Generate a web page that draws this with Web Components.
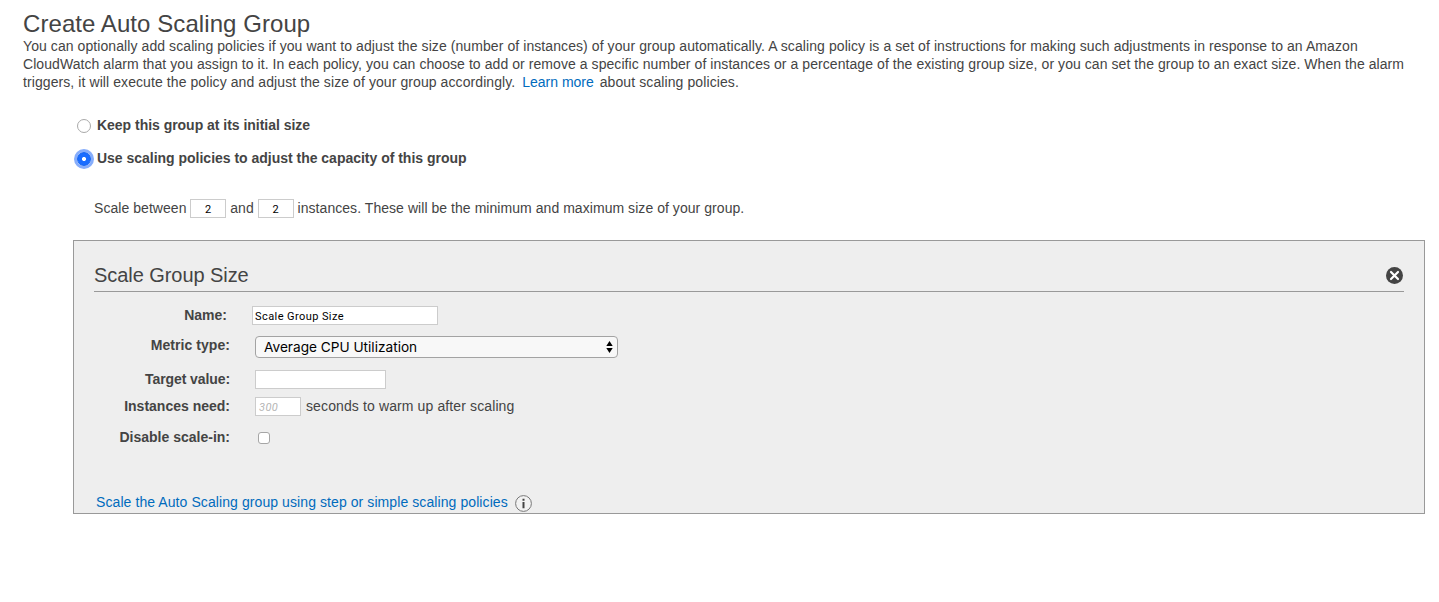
<!DOCTYPE html>
<html lang="en">
<head>
<meta charset="utf-8">
<title>Create Auto Scaling Group</title>
<style>
body{margin:0;background:#fff;font-family:"Liberation Sans",Arial,sans-serif;font-size:14px;line-height:18px;color:#444}
</style>
</head>
<body>
<asg-page></asg-page>
<script>
const define=(name,html,setup)=>{
  const t=document.createElement('template');t.innerHTML=html;
  customElements.define(name,class extends HTMLElement{
    constructor(){super();this.attachShadow({mode:'open'}).append(t.content.cloneNode(true));}
    connectedCallback(){if(setup)setup(this,this.shadowRoot);}
  });
};

define('asg-radio',`<style>
:host{display:flex;align-items:center;height:18px;font-weight:bold;white-space:nowrap}
i{box-sizing:border-box;flex:none;width:14px;height:14px;margin:2px 6px 0 0;border:1px solid #a9a9a9;border-radius:50%;background:#fff}
:host([checked]) i{border:1px solid #0f62f2;background:radial-gradient(circle,#fff 0 1.6px,#1a6dff 2.4px);box-shadow:0 0 0 3px #86adfb}
span{letter-spacing:var(--track,0)}
</style><i></i><span><slot></slot></span>`);

define('asg-input',`<style>
:host{display:inline-flex;box-sizing:border-box;align-items:center;width:var(--w,36px);height:19px;border:1px solid #ccc;background:#fff;color:#000;font:11px/15px Roboto,sans-serif;letter-spacing:.42px;padding:2px 2px 0;white-space:nowrap}
:host([center]){justify-content:center}
:host([hint]){color:#b5b5b5;font-style:italic;padding-left:3px}
</style><slot></slot>`);

define('asg-select',`<style>
:host{display:flex;box-sizing:border-box;align-items:center;justify-content:space-between;width:363px;height:22px;border:1px solid #a3a3a3;border-radius:4px;background:#f8f8f8;color:#000;font:13.65px/20px Inter,sans-serif;padding:0 4px 0 8px}
svg{display:block}
</style><span><slot></slot></span><svg width="7" height="14" viewBox="0 0 7 14"><path d="M3.5 1 6.7 6H.3zM3.5 13 6.7 8H.3z" fill="#000"/></svg>`);

define('asg-checkbox',`<style>
:host{display:block;box-sizing:border-box;width:12px;height:12px;border:1px solid #a6a6a6;border-radius:3px;background:#fff}
</style>`);

define('asg-close',`<style>:host{display:block;width:17px;height:17px}svg{display:block}</style>
<svg width="17" height="17" viewBox="0 0 17 17"><circle cx="8.5" cy="8.5" r="8.5" fill="#444"/><path d="M5 5l7 7M12 5l-7 7" stroke="#fff" stroke-width="2.2" stroke-linecap="round"/></svg>`);

define('asg-info',`<style>:host{display:block;width:17px;height:17px}svg{display:block}</style>
<svg width="17" height="17" viewBox="0 0 17 17"><circle cx="8.5" cy="8.5" r="7.9" fill="#f2f2f2" stroke="#777" stroke-width="1"/><path d="M7.5 3.8h2v2h-2zM7.5 7h2v6.2h-2z" fill="#444"/></svg>`);

define('asg-field',`<style>
:host{display:flex;height:var(--h,27px);align-items:flex-start}
.l{box-sizing:border-box;width:var(--lw,136px);text-align:right;font-weight:bold;white-space:nowrap}
.l span{letter-spacing:var(--track,0)}
.c{display:flex;align-items:center;gap:5px;margin:var(--ct,0) 0 0 var(--cl,25px)}
</style><div class="l"><span class="lab"></span></div><div class="c"><slot></slot></div>`,
(el,r)=>{r.querySelector('.lab').textContent=el.getAttribute('label');});

define('asg-panel',`<style>
:host{display:flex;flex-direction:column;box-sizing:border-box;width:1352px;height:274px;border:1px solid #999;background:#eee;padding:20px 20px 0}
header{display:flex;box-sizing:border-box;justify-content:space-between;align-items:flex-start;height:31px;border-bottom:1px solid #999}
h2{margin:0;font-size:20px;line-height:28px;font-weight:normal;letter-spacing:-.06px}
asg-close{margin:6px 1px 0 0}
</style><header><h2><slot name="title"></slot></h2><asg-close></asg-close></header><slot></slot>`);

define('asg-page',`<style>
:host{display:block;height:514px}
h1{margin:0 0 0 23px;padding-top:10px;font-size:24px;line-height:27px;font-weight:normal;letter-spacing:.07px}
.intro{margin:0 0 0 23px;white-space:nowrap}
a{color:#006bbd;text-decoration:none}
.intro a{margin:0 2px 0 3px}
.radios{display:flex;flex-direction:column;gap:15px;margin:25px 0 0 77px}
.scale{display:flex;align-items:center;height:19px;margin:32px 0 0 94px;white-space:nowrap}
.scale span{margin-top:-1px;letter-spacing:.05px}
.scale asg-input{margin:0 3.9px 0 3.9px}
asg-panel{margin:22px 0 0 73px}
.fields{height:187px;padding-top:14px}
.warm{margin-top:-1px;letter-spacing:.118px}
.more{display:flex;height:18px;gap:7px;margin-left:2px;white-space:nowrap;letter-spacing:.084px}
.more asg-info{margin-top:2px}
</style>
<h1>Create Auto Scaling Group</h1>
<p class="intro"><span style="letter-spacing:.08px">You can optionally add scaling policies if you want to adjust the size (number of instances) of your group automatically. A scaling policy is a set of instructions for making such adjustments in response to an Amazon</span><br><span style="letter-spacing:.066px">CloudWatch alarm that you assign to it. In each policy, you can choose to add or remove a specific number of instances or a percentage of the existing group size, or you can set the group to an exact size. When the alarm</span><br><span style="letter-spacing:.084px">triggers, it will execute the policy and adjust the size of your group accordingly.</span> <a href="#">Learn more</a> <span style="letter-spacing:.1px">about scaling policies.</span></p>
<div class="radios"><asg-radio style="--track:-.026px">Keep this group at its initial size</asg-radio><asg-radio checked style="--track:-.014px">Use scaling policies to adjust the capacity of this group</asg-radio></div>
<div class="scale"><span>Scale between</span><asg-input center>2</asg-input><span>and</span><asg-input center>2</asg-input><span>instances. These will be the minimum and maximum size of your group.</span></div>
<asg-panel><span slot="title">Scale Group Size</span>
<div class="fields">
<asg-field label="Name:" style="--lw:133px;--h:30px"><asg-input style="--w:186px">Scale Group Size</asg-input></asg-field>
<asg-field label="Metric type:" style="--h:34px;--track:.05px"><asg-select>Average CPU Utilization</asg-select></asg-field>
<asg-field label="Target value:" style="--track:-.09px"><asg-input style="--w:131px"></asg-input></asg-field>
<asg-field label="Instances need:" style="--h:31px"><asg-input hint style="--w:46px">300</asg-input><span class="warm">seconds to warm up after scaling</span></asg-field>
<asg-field label="Disable scale-in:" style="--ct:4px;--cl:28px"><asg-checkbox></asg-checkbox></asg-field>
</div>
<div class="more"><a href="#">Scale the Auto Scaling group using step or simple scaling policies</a><asg-info></asg-info></div>
</asg-panel>`);
</script>
</body>
</html>
